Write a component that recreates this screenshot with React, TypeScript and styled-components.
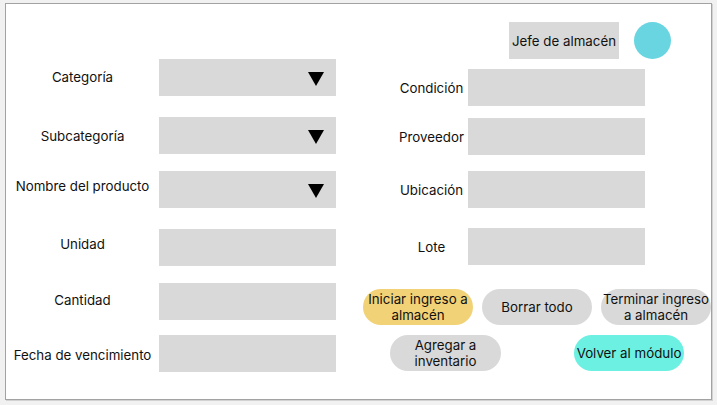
import React from "react";
import styled, { createGlobalStyle } from "styled-components";

const Global = createGlobalStyle`
  html, body { margin: 0; padding: 0; background: #f1f1f1; }
  body { font-family: Inter, "Noto Sans", sans-serif; color: #111111; }
  #root { width: 717px; height: 405px; }
`;

const Frame = styled.div`
  box-sizing: border-box;
  margin: 3px 0 0 5px;
  width: 707px;
  height: 397px;
  border: 1px solid #a2a2a2;
  box-shadow: 1px 1px 0 #d2d2d2;
  background: #ffffff;
  display: flex;
  overflow: hidden;
`;

const LeftColumn = styled.div`
  width: 331px;
  display: flex;
  flex-direction: column;
  padding-top: 55px;
`;

const RightColumn = styled.div`
  flex: 1;
  display: flex;
  flex-direction: column;
`;

const LeftRow = styled.div<{ $mt: number }>`
  display: grid;
  grid-template-columns: 153px 177px;
  margin-top: ${(p) => p.$mt}px;
  height: 37px;
`;

const LeftLabel = styled.div<{ $up?: number }>`
  align-self: center;
  text-align: center;
  font-size: 13.3px;
  line-height: 16px;
  white-space: nowrap;
  margin-bottom: ${(p) => (p.$up && p.$up > 0 ? p.$up * 2 : 0)}px;
  margin-top: ${(p) => (p.$up && p.$up < 0 ? -p.$up * 2 : 0)}px;
`;

const Field = styled.div`
  background: #d9d9d9;
  height: 100%;
  box-sizing: border-box;
`;

const SelectField = styled(Field)`
  display: flex;
  align-items: center;
  justify-content: flex-end;
  padding: 2px 12px 0 0;
`;

const Header = styled.div`
  display: flex;
  align-items: center;
  gap: 15px;
  margin-top: 18px;
  padding-left: 173px;
`;

const RoleBox = styled.div`
  width: 110px;
  height: 37px;
  background: #d9d9d9;
  display: flex;
  align-items: center;
  justify-content: center;
  font-size: 13.3px;
  white-space: nowrap;
`;

const Avatar = styled.div`
  width: 37px;
  height: 37px;
  border-radius: 50%;
  background: #69d5e1;
`;

const RightRow = styled.div<{ $mt: number }>`
  display: grid;
  grid-template-columns: 63px 177px;
  column-gap: 5px;
  padding-left: 64px;
  margin-top: ${(p) => p.$mt}px;
  height: 37px;
`;

const RightLabel = styled.div`
  align-self: center;
  display: flex;
  justify-content: center;
  font-size: 13.3px;
  line-height: 16px;
  white-space: nowrap;
`;

const ButtonRow = styled.div<{ $mt: number; $pl: number; $gap: number }>`
  display: flex;
  margin-top: ${(p) => p.$mt}px;
  padding-left: ${(p) => p.$pl}px;
  gap: ${(p) => p.$gap}px;
`;

const Pill = styled.div<{ $bg: string; $w?: number }>`
  width: ${(p) => p.$w ?? 110}px;
  height: 36px;
  border-radius: 18px;
  background: ${(p) => p.$bg};
  display: flex;
  align-items: center;
  justify-content: center;
  text-align: center;
  font-size: 13.3px;
  line-height: 16px;
  white-space: nowrap;
  flex-shrink: 0;
`;

const Arrow = () => (
  <svg width="16" height="14" viewBox="0 0 16 14">
    <polygon points="0,0 16,0 8,14" fill="#000" />
  </svg>
);

const leftRows = [
  { label: "Categoría", mt: 0, up: 1, select: true },
  { label: "Subcategoría", mt: 21, up: 0, select: true },
  { label: "Nombre del producto", mt: 17, up: 4, select: true },
  { label: "Unidad", mt: 21, up: 4, select: false },
  { label: "Cantidad", mt: 17, up: 2, select: false },
  { label: "Fecha de vencimiento", mt: 15, up: -1, select: false },
];

const rightRows = [
  { label: "Condición", mt: 10 },
  { label: "Proveedor", mt: 12 },
  { label: "Ubicación", mt: 16 },
  { label: "Lote", mt: 20 },
];

export default function App() {
  return (
    <>
      <Global />
      <Frame>
        <LeftColumn>
          {leftRows.map((r) => (
            <LeftRow key={r.label} $mt={r.mt}>
              <LeftLabel $up={r.up}>{r.label}</LeftLabel>
              {r.select ? (
                <SelectField>
                  <Arrow />
                </SelectField>
              ) : (
                <Field />
              )}
            </LeftRow>
          ))}
        </LeftColumn>
        <RightColumn>
          <Header>
            <RoleBox>Jefe de almacén</RoleBox>
            <Avatar />
          </Header>
          {rightRows.map((r) => (
            <RightRow key={r.label} $mt={r.mt}>
              <RightLabel>{r.label}</RightLabel>
              <Field />
            </RightRow>
          ))}
          <ButtonRow $mt={24} $pl={27} $gap={9}>
            <Pill $bg="#f1d277">
              Iniciar ingreso a
              <br />
              almacén
            </Pill>
            <Pill $bg="#d9d9d9">Borrar todo</Pill>
            <Pill $bg="#d9d9d9">
              Terminar ingreso
              <br />a almacén
            </Pill>
          </ButtonRow>
          <ButtonRow $mt={10} $pl={54} $gap={73}>
            <Pill $bg="#d9d9d9" $w={111}>
              Agregar a
              <br />
              inventario
            </Pill>
            <Pill $bg="#6cf0e1">Volver al módulo</Pill>
          </ButtonRow>
        </RightColumn>
      </Frame>
    </>
  );
}
